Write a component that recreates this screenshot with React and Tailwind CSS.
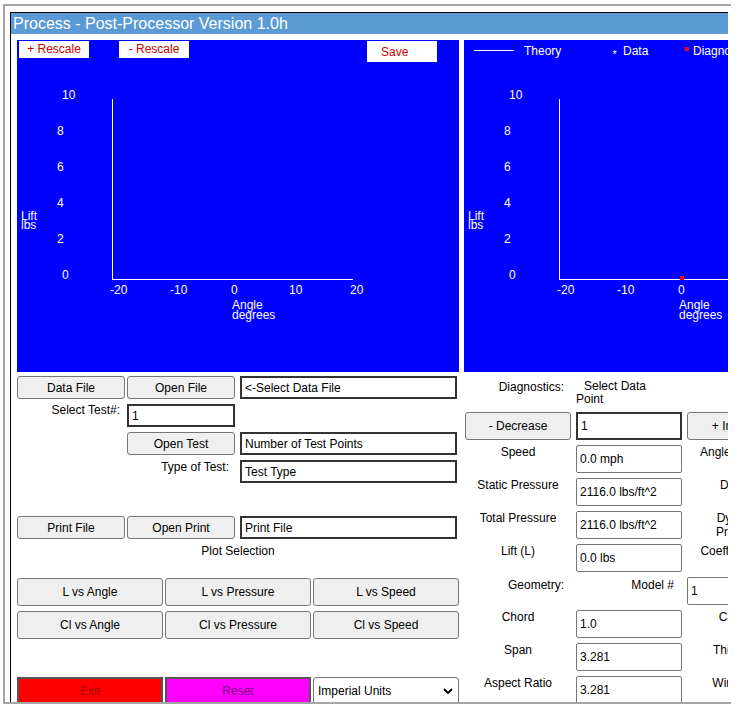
import React from "react";

const FONT = "font-['Liberation_Sans',Arial,sans-serif]";
const btn =
  "bg-[#efefef] border border-[#767676] rounded-[3px] text-black text-[12px] leading-[14px] flex items-center justify-center whitespace-nowrap overflow-hidden shrink-0";
const thick =
  "border-2 border-[#333333] bg-white text-black text-[12px] px-[3px] outline-none shrink-0";
const thin =
  "border border-[#767676] rounded-[2px] bg-white text-black text-[12px] px-[3px] outline-none shrink-0";

function Chart({ legend }) {
  const ys = [
    ["10", 45, 59],
    ["8", 40, 95],
    ["6", 40, 131],
    ["4", 40, 167],
    ["2", 40, 203],
    ["0", 45, 239],
  ];
  const xs = [
    ["-20", 93],
    ["-10", 153],
    ["0", 214],
    ["10", 272],
    ["20", 333],
  ];
  return (
    <svg
      width="442"
      height="332"
      className="block"
      fontFamily="'Liberation Sans', Arial, sans-serif"
      fontSize="12"
    >
      <rect width="442" height="332" fill="#0000ff" />
      <line x1="95.5" y1="59" x2="95.5" y2="240" stroke="#fff" strokeWidth="1" />
      <line x1="95" y1="239.5" x2="336" y2="239.5" stroke="#fff" strokeWidth="1" />
      {ys.map(([t, x, y]) => (
        <text key={t} x={x} y={y} fill="#fff">
          {t}
        </text>
      ))}
      {xs.map(([t, x]) => (
        <text key={t} x={x} y={254} fill="#fff">
          {t}
        </text>
      ))}
      <text x="215" y="269" fill="#fff">Angle</text>
      <text x="215" y="279" fill="#fff">degrees</text>
      <text x="4" y="180" fill="#fff">Lift</text>
      <text x="4" y="189" fill="#fff">lbs</text>
      {legend && (
        <g>
          <line x1="10" y1="10.5" x2="50" y2="10.5" stroke="#fff" strokeWidth="1" />
          <text x="60" y="15" fill="#fff">Theory</text>
          <text x="148.5" y="17.5" fill="#fff" fontSize="11">*</text>
          <text x="159" y="15" fill="#fff">Data</text>
          <rect x="221" y="7" width="4" height="4" fill="#ff0000" />
          <text x="229" y="15" fill="#fff">Diagnostics</text>
          <rect x="216" y="236" width="4" height="4" fill="#ff0000" />
        </g>
      )}
    </svg>
  );
}

function LeftPanel() {
  return (
    <div className="w-[442px] shrink-0 flex flex-col">
      <div className="relative w-[442px] h-[332px]">
        <Chart />
        <div className="absolute left-[2px] top-[1px] w-[70px] h-[17px] bg-white text-[#cc0000] text-[12px] leading-[17px] text-center whitespace-nowrap">
          + Rescale
        </div>
        <div className="absolute left-[102px] top-[1px] w-[70px] h-[17px] bg-white text-[#cc0000] text-[12px] leading-[17px] text-center whitespace-nowrap">
          - Rescale
        </div>
        <div className="absolute left-[350px] top-[1px] w-[70px] h-[21px] bg-white text-[#cc0000] text-[12px] leading-[22px] pl-[14px] whitespace-nowrap overflow-hidden">
          Save
        </div>
      </div>

      <div className="mt-[4px] flex flex-col">
        <div className="flex h-[23px]">
          <button className={`${btn} w-[108px] h-[23px]`}>Data File</button>
          <button className={`${btn} ml-[2px] w-[108px] h-[23px]`}>Open File</button>
          <input readOnly value="<-Select Data File" className={`${thick} ml-[5px] w-[217px] h-[23px]`} />
        </div>
        <div className="mt-[5px] flex h-[23px]">
          <div className="w-[108px] text-right pr-[5px] text-[12px] leading-[14px] -mt-[1px] whitespace-nowrap">
            Select Test#:
          </div>
          <input readOnly value="1" className={`${thick} ml-[2px] w-[108px] h-[23px]`} />
        </div>
        <div className="mt-[5px] flex h-[23px]">
          <div className="w-[108px]" />
          <button className={`${btn} ml-[2px] w-[108px] h-[23px]`}>Open Test</button>
          <input readOnly value="Number of Test Points" className={`${thick} ml-[5px] w-[217px] h-[23px]`} />
        </div>
        <div className="mt-[5px] flex h-[23px]">
          <div className="w-[108px]" />
          <div className="ml-[2px] w-[108px] text-right pr-[6px] text-[12px] leading-[14px] whitespace-nowrap">
            Type of Test:
          </div>
          <input readOnly value="Test Type" className={`${thick} ml-[5px] w-[217px] h-[23px]`} />
        </div>
        <div className="mt-[5px] h-[23px]" />
        <div className="mt-[5px] flex h-[23px]">
          <button className={`${btn} w-[108px] h-[23px]`}>Print File</button>
          <button className={`${btn} ml-[2px] w-[108px] h-[23px]`}>Open Print</button>
          <input readOnly value="Print File" className={`${thick} ml-[5px] w-[217px] h-[23px]`} />
        </div>
        <div className="mt-[5px] text-center text-[12px] leading-[14px]">Plot Selection</div>

        <div className="mt-[20px] grid grid-cols-3 gap-x-[2px] gap-y-[5px]">
          {["L vs Angle", "L vs Pressure", "L vs Speed", "Cl vs Angle", "Cl vs Pressure", "Cl vs Speed"].map((t) => (
            <button key={t} className={`${btn} h-[28px]`}>
              {t}
            </button>
          ))}
        </div>

        <div className="mt-[38px] grid grid-cols-3 gap-x-[2px]">
          <button className="h-[28px] bg-[#ff0000] border-2 border-[#555555] text-[#a00000] text-[12px] leading-[14px] flex items-center justify-center">
            Exit
          </button>
          <button className="h-[28px] bg-[#ff00ff] border-2 border-[#555555] text-[#7a007a] text-[12px] leading-[14px] flex items-center justify-center">
            Reset
          </button>
          <div className="h-[28px] bg-white border border-[#767676] rounded-[3px] flex items-center justify-between pl-[4px] pr-[4px] text-[12px]">
            <span>Imperial Units</span>
            <svg width="10" height="6" viewBox="0 0 10 6" className="mr-[1px]">
              <path d="M1 1 L5 5 L9 1" fill="none" stroke="#000" strokeWidth="1.8" />
            </svg>
          </div>
        </div>
      </div>
    </div>
  );
}

function C3Label({ children }) {
  return <div className="text-center text-[12px] leading-[14px] whitespace-nowrap">{children}</div>;
}

function RightPanel() {
  const rows = [
    ["Speed", "0.0 mph", "Angle of Attack"],
    ["Static Pressure", "2116.0 lbs/ft^2", "Density"],
    ["Total Pressure", "2116.0 lbs/ft^2", "DP"],
    ["Lift (L)", "0.0 lbs", "Coefficient (Cl)"],
  ];
  const geo = [
    ["Chord", "1.0", "Camber"],
    ["Span", "3.281", "Thickness"],
    ["Aspect Ratio", "3.281", "Wing Area"],
  ];
  const row = (r) => (
    <React.Fragment key={r[0]}>
      <div className="text-center text-[12px] leading-[14px] whitespace-nowrap">{r[0]}</div>
      <input readOnly value={r[1]} className={`${thin} w-[106px] h-[28px]`} />
      {r[2] === "DP" ? (
        <div className="text-center text-[12px] leading-[14px] whitespace-nowrap">
          Dynamic
          <br />
          Pressure
        </div>
      ) : (
        <C3Label>{r[2]}</C3Label>
      )}
    </React.Fragment>
  );
  return (
    <div className="w-[442px] shrink-0 flex flex-col">
      <div className="relative w-[442px] h-[332px]">
        <Chart legend />
      </div>
      <div className="mt-[7px] pl-[1px] grid grid-cols-[106px_106px_106px] auto-rows-[28px] gap-x-[5px] gap-y-[5px]">
        <div className="text-right pr-[7px] text-[12px] leading-[14px] pt-[1px] whitespace-nowrap">Diagnostics:</div>
        <div className="text-[12px] leading-[13px] pt-[1px] whitespace-nowrap">
          <div className="pl-[8px]">Select Data</div>
          <div>Point</div>
        </div>
        <div />

        <button className={`${btn} h-[28px]`}>- Decrease</button>
        <input readOnly value="1" className={`${thick} w-[106px] h-[28px]`} />
        <button className={`${btn} h-[28px]`}>+ Increase</button>

        {rows.map(row)}

        <div className="text-right pr-[7px] text-[12px] leading-[14px] pt-[1px] whitespace-nowrap">Geometry:</div>
        <div className="text-right pr-[8px] text-[12px] leading-[14px] pt-[1px] whitespace-nowrap">Model #</div>
        <input readOnly value="1" className={`${thin} w-[106px] h-[28px]`} />

        {geo.map(row)}
      </div>
    </div>
  );
}

export default function App() {
  return (
    <div className={`w-[737px] h-[709px] bg-white overflow-hidden text-black ${FONT}`}>
      <div className="ml-[3px] mt-[4px] w-[728px] h-[700px] border-t-2 border-l-2 border-b-2 border-[#a5a5a5]">
        <div className="w-[723px] h-full overflow-hidden pl-[5px] pt-[6px]">
          <div className="w-[920px] h-[800px] border border-black">
            <div className="h-[21px] bg-[#5b9bd5] text-white text-[16px] leading-[21px] pl-[2px] whitespace-nowrap">
              Process - Post-Processor Version 1.0h
            </div>
            <div className="flex pl-[6px] pt-[6px] gap-[5px]">
              <LeftPanel />
              <RightPanel />
            </div>
          </div>
        </div>
      </div>
    </div>
  );
}
